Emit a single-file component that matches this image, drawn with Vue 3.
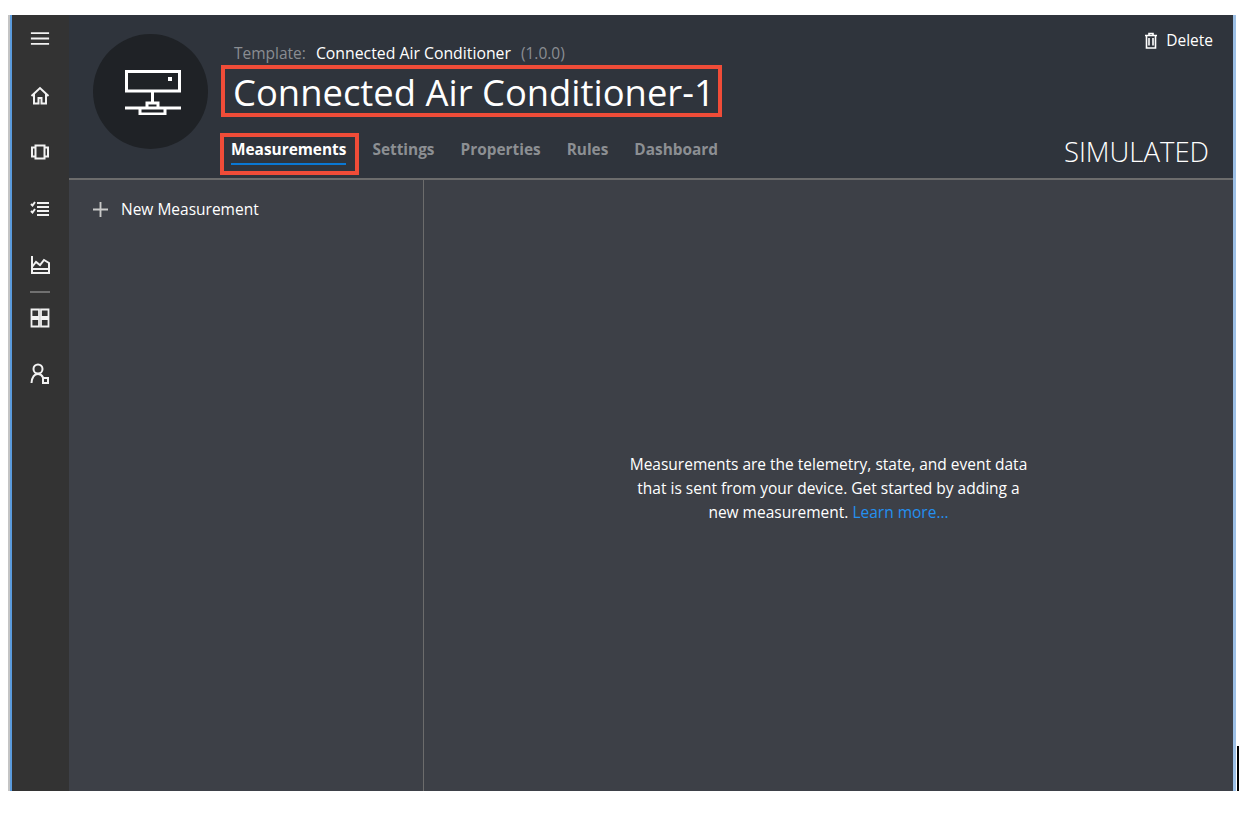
<script setup>
const tabs = ['Measurements', 'Settings', 'Properties', 'Rules', 'Dashboard']
</script>

<template>
  <div class="page">
    <div class="frame">
      <nav class="rail">
        <svg class="ico menu" viewBox="0 0 22 16"><path d="M1 2h20M1 8h20M1 14h20" /></svg>
        <svg class="ico home" viewBox="0 0 20 20"><path d="M1.500 10 10 2l8.500 8M4 8v9.500h4.500V12h3v5.500H16V8" /></svg>
        <svg class="ico devices" viewBox="0 0 20 20"><path d="M5.500 3.500h9v13h-9zM5.500 5.500H2v9h3.500M14.500 5.500H18v9h-3.500" /></svg>
        <svg class="ico rules" viewBox="0 0 20 20"><path d="M1 5l1.500 1.500L5 3M1 12l1.500 1.500L5 10M7 4h12M7 8h12M7 12h12M7 16h12" /></svg>
        <svg class="ico chart" viewBox="0 0 20 20"><path d="M2 1v17h17V8l-5-3-4 5-4-3-4 5M2 14h17" /></svg>
        <div class="sep"></div>
        <svg class="ico grid" viewBox="0 0 20 20"><path d="M1.500 1.500h7.500v7.500H1.500zM11 1.500h7.500v7.500H11zM1.500 11h7.500v7.500H1.500zM11 11h7.500v7.500H11z" /></svg>
        <svg class="ico admin" viewBox="0 0 20 22"><circle cx="8" cy="6" r="4.500" /><path d="M1.500 20c.5-5.500 3-9 6.500-9 2.500 0 4 1.200 5 3.500" /><rect x="13" y="15" width="5" height="5" /></svg>
      </nav>

      <div class="content">
        <header class="header">
          <div class="avatar">
            <svg viewBox="0 0 56 46" class="avatar-ico">
              <path d="M1.500 2.500h53V22h-53zM27.500 22v12M22 39v-5h11v5M15 39h25v6H15zM0 39h15M40 39h16" />
              <rect x="43" y="8" width="4" height="4" class="dot" />
            </svg>
          </div>
          <div class="info">
            <div class="template">
              <span class="muted">Template:</span>
              <span class="tname">Connected Air Conditioner</span>
              <span class="muted">(1.0.0)</span>
            </div>
            <h1 class="title">Connected Air Conditioner-1</h1>
            <div class="tabs">
              <div v-for="(t, i) in tabs" :key="t" class="tab" :class="{ active: i === 0 }">{{ t }}</div>
            </div>
            <div class="mark mark-title"></div>
            <div class="mark mark-tab"></div>
          </div>
          <div class="side">
            <div class="delete">
              <svg class="trash" viewBox="0 0 14 17"><path d="M1 3.500h12M5 3.500V1.500h4v2M2.500 3.500v12.500h9V3.500M5 6v7.500M9 6v7.500" /></svg>
              <span>Delete</span>
            </div>
            <div class="sim">SIMULATED</div>
          </div>
        </header>
        <div class="body">
          <aside class="list">
            <div class="add">
              <svg class="plus" viewBox="0 0 16 16"><path d="M8 0v16M0 8h16" /></svg>
              <span>New Measurement</span>
            </div>
          </aside>
          <main class="empty">
            <p class="msg">
              Measurements are the telemetry, state, and event data<br />
              that is sent from your device. Get started by adding a<br />
              new measurement. <a class="link">Learn more...</a>
            </p>
          </main>
        </div>
      </div>
      <div class="corner"></div>
    </div>
  </div>
</template>

<style>
html, body { margin: 0; background: #fff; }
</style>

<style scoped>
.page {
  padding: 15px 0 0 8px;
  height: 798px;
  box-sizing: border-box;
  font-family: "Open Sans", "Noto Sans", sans-serif;
  overflow: hidden;
}
.frame {
  position: relative;
  display: flex;
  height: 776px;
  box-sizing: border-box;
  border-left: 2px solid #5b9bdc;
  border-right: 3px solid #9dc0e6;
  box-shadow: -2px 0 0 #c4c4c4;
  margin-left: 2px;
  width: 1226px;
}
.corner {
  position: absolute;
  right: -6px;
  bottom: 0;
  width: 2px;
  height: 45px;
  background: #000;
}
.rail {
  width: 57px;
  flex: none;
  background: #333333;
  display: flex;
  flex-direction: column;
  align-items: center;
  padding-right: 2px;
  box-sizing: border-box;
}
.ico { fill: none; stroke: #f2f2f2; stroke-width: 2; width: 20px; height: 20px; flex: none; }
.menu { margin-top: 16px; height: 15px; }
.home { margin-top: 40px; }
.devices { margin-top: 36px; }
.rules { margin-top: 37px; }
.chart { margin-top: 36px; }
.sep { width: 20px; height: 2px; background: #707070; margin-top: 16px; }
.grid { margin-top: 15px; stroke-width: 1.800; }
.admin { margin-top: 35px; height: 22px; }
.content {
  flex: 1;
  min-width: 0;
  display: flex;
  flex-direction: column;
}
.header {
  height: 165px;
  flex: none;
  box-sizing: border-box;
  background: #2f343c;
  border-bottom: 2px solid #6c6c6c;
  display: flex;
}
.avatar {
  width: 115px;
  height: 115px;
  border-radius: 50%;
  background: #1f2226;
  margin: 19px 0 0 24px;
  flex: none;
  display: flex;
  align-items: center;
  justify-content: center;
}
.avatar-ico { width: 56px; height: 46px; fill: none; stroke: #fff; stroke-width: 3; margin-left: 5px; }
.avatar-ico .dot { fill: #fff; stroke: none; }
.info {
  position: relative;
  margin-left: 26px;
  flex: 1;
  min-width: 0;
}
.template {
  margin-top: 28px;
  font-size: 15.500px;
  line-height: 20px;
  display: flex;
  gap: 10px;
  color: #fff;
}
.muted { color: #8a8d92; }
.tname { color: #fff; font-size: 15.800px; }
.title {
  margin: 4px 0 0 -1px;
  font-weight: 400;
  font-size: 36.400px;
  line-height: 50px;
  color: #fff;
  white-space: nowrap;
}
.tabs {
  display: flex;
  gap: 26px;
  margin-top: 22px;
  margin-left: -3px;
}
.tab {
  font-size: 15.400px;
  font-weight: 700;
  line-height: 22px;
  color: #8c8f93;
  padding-bottom: 2px;
  border-bottom: 2px solid transparent;
}
.tab.active { color: #fff; border-bottom-color: #0a78d4; }
.mark { position: absolute; border: 4px solid #f04c38; box-sizing: border-box; pointer-events: none; }
.mark-title { left: -13px; top: 50px; width: 501px; height: 52px; }
.mark-tab { left: -14px; top: 118px; width: 139px; height: 42px; }
.side {
  width: 240px;
  flex: none;
  padding-right: 20px;
  box-sizing: border-box;
  display: flex;
  flex-direction: column;
  align-items: flex-end;
}
.delete {
  display: flex;
  align-items: center;
  gap: 8px;
  margin-top: 15px;
  font-size: 15.500px;
  line-height: 20px;
  color: #fff;
}
.trash { width: 14px; height: 17px; fill: none; stroke: #fff; stroke-width: 1.600; }
.sim {
  margin-top: 84px;
  margin-right: 4px;
  font-size: 27.500px;
  line-height: 36px;
  color: #fff;
  font-weight: 300;
}
.body {
  flex: 1;
  min-height: 0;
  display: flex;
  background: #3d4047;
}
.list {
  width: 355px;
  flex: none;
  box-sizing: border-box;
  border-right: 1px solid #6c6c6c;
}
.add {
  display: flex;
  align-items: center;
  gap: 13px;
  margin: 19px 0 0 24px;
  font-size: 15.500px;
  line-height: 20px;
  color: #fff;
}
.plus { width: 15px; height: 15px; fill: none; stroke: #c9c9c9; stroke-width: 2; }
.empty {
  flex: 1;
  display: flex;
  align-items: center;
  justify-content: center;
}
.msg {
  margin: 5px 0 0;
  font-size: 15.500px;
  line-height: 24px;
  color: #fff;
  text-align: center;
}
.link { color: #2490f0; }
</style>
